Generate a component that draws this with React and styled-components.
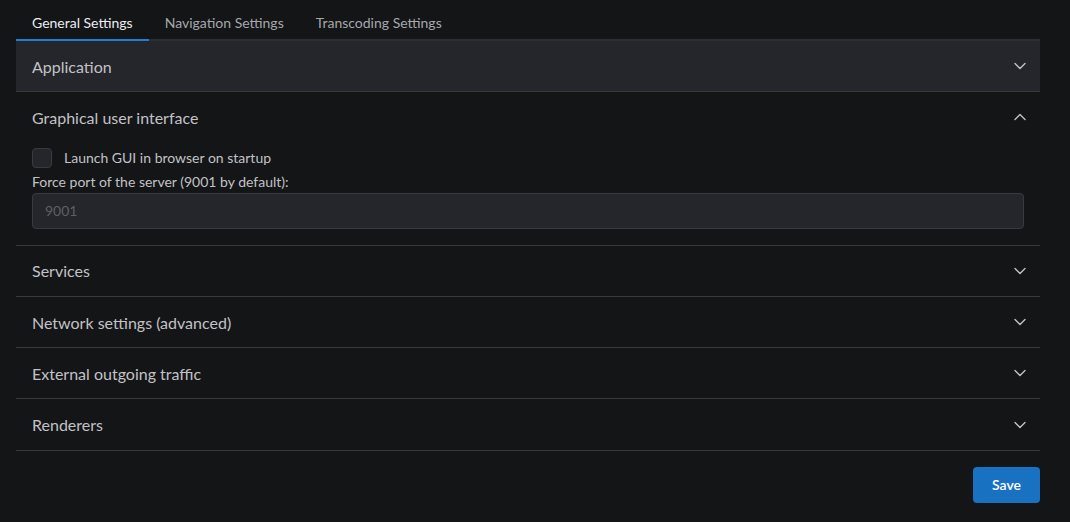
import { useState } from 'react';
import styled, { createGlobalStyle } from 'styled-components';

const GlobalStyle = createGlobalStyle`
  body {
    margin: 0;
    background: #141517;
    color: #c1c2c5;
    font-family: "Segoe UI", Lato, "Liberation Sans", sans-serif;
  }
`;

const Page = styled.div`
  padding: 0 30px 0 16px;
  display: flex;
  flex-direction: column;
`;

const TabList = styled.div`
  display: flex;
  border-bottom: 2px solid #2c2e33;
`;

const Tab = styled.button`
  height: 41px;
  padding: 5px 16px 0;
  margin-bottom: -2px;
  background: none;
  border: none;
  border-bottom: 2px solid ${p => (p.$active ? '#1c7ed6' : 'transparent')};
  color: ${p => (p.$active ? '#e9ecef' : '#a6a7ab')};
  font-family: inherit;
  font-size: 14px;
  cursor: pointer;
`;

const Item = styled.div`
  border-bottom: 1px solid #373a40;
  background: ${p => (p.$shaded ? '#25262b' : 'transparent')};
`;

const Control = styled.div`
  height: 50.3px;
  padding: 0 12px 0 16px;
  display: flex;
  align-items: center;
  justify-content: space-between;
  font-size: 16px;
  color: #c1c2c5;
  cursor: pointer;
`;

const Content = styled.div`
  padding: 5px 16px 16px;
  display: flex;
  flex-direction: column;
`;

const CheckRow = styled.label`
  display: flex;
  align-items: center;
  gap: 12px;
  font-size: 14px;
  height: 20px;
  margin-bottom: 3px;
`;

const Box = styled.span`
  width: 20px;
  height: 20px;
  box-sizing: border-box;
  border-radius: 4px;
  border: 1px solid #373a40;
  background: #25262b;
`;

const FieldLabel = styled.div`
  font-size: 14px;
  line-height: 21px;
  margin-bottom: 1px;
`;

const Input = styled.input`
  height: 36px;
  box-sizing: border-box;
  width: 100%;
  padding: 0 12px;
  border: 1px solid #373a40;
  border-radius: 4px;
  background: #25262b;
  color: #5c5f66;
  font-family: inherit;
  font-size: 14px;
  outline: none;
  &::placeholder { color: #5c5f66; }
`;

const Footer = styled.div`
  display: flex;
  justify-content: flex-end;
  padding-top: 16px;
`;

const SaveButton = styled.button`
  height: 36px;
  padding: 0 19px;
  border: none;
  border-radius: 4px;
  background: #1971c2;
  color: #ffffff;
  font-family: inherit;
  font-size: 14px;
  font-weight: 600;
`;

const Chevron = ({ up }) => (
  <svg width="16" height="16" viewBox="0 0 16 16" fill="none">
    <path
      d={up ? 'M3 10.5L8 5.5L13 10.5' : 'M3 5.5L8 10.5L13 5.5'}
      stroke="#c1c2c5"
      strokeWidth="1.4"
      strokeLinecap="round"
      strokeLinejoin="round"
    />
  </svg>
);

const sections = [
  'Application',
  'Graphical user interface',
  'Services',
  'Network settings (advanced)',
  'External outgoing traffic',
  'Renderers',
];

export default function App() {
  const [tab, setTab] = useState(0);
  const [open, setOpen] = useState(1);
  const tabs = ['General Settings', 'Navigation Settings', 'Transcoding Settings'];

  return (
    <>
      <GlobalStyle />
      <Page>
        <TabList>
          {tabs.map((t, i) => (
            <Tab key={t} $active={i === tab} onClick={() => setTab(i)}>{t}</Tab>
          ))}
        </TabList>
        {sections.map((s, i) => (
          <Item key={s} $shaded={i === 0}>
            <Control onClick={() => setOpen(open === i ? -1 : i)}>
              {s}
              <Chevron up={open === i} />
            </Control>
            {open === i && i === 1 && (
              <Content>
                <CheckRow>
                  <Box />
                  Launch GUI in browser on startup
                </CheckRow>
                <FieldLabel>Force port of the server (9001 by default):</FieldLabel>
                <Input placeholder="9001" />
              </Content>
            )}
          </Item>
        ))}
        <Footer>
          <SaveButton>Save</SaveButton>
        </Footer>
      </Page>
    </>
  );
}
